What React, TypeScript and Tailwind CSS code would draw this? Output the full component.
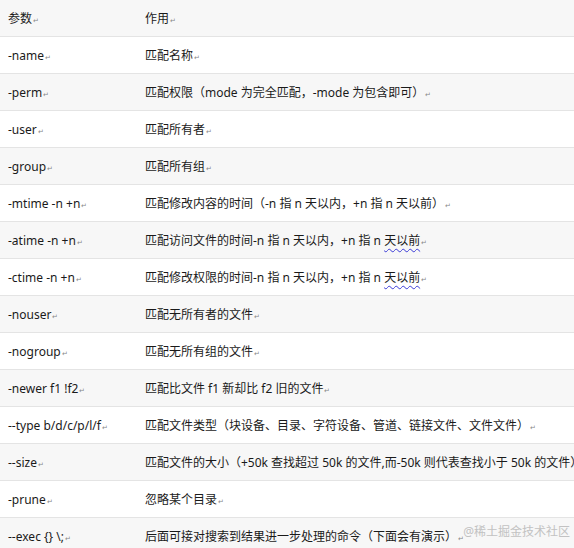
import React from "react";

const rows: [string, React.ReactNode][] = [
  ["-name", "匹配名称"],
  ["-perm", "匹配权限（mode 为完全匹配，-mode 为包含即可）"],
  ["-user", "匹配所有者"],
  ["-group", "匹配所有组"],
  ["-mtime -n +n", "匹配修改内容的时间（-n 指 n 天以内，+n 指 n 天以前）"],
  [
    "-atime -n +n",
    <>
      匹配访问文件的时间-n 指 n 天以内，+n 指 n{" "}
      <span className="underline decoration-wavy decoration-[#3b3bd6] underline-offset-[3px] decoration-1">天以前</span>
    </>,
  ],
  [
    "-ctime -n +n",
    <>
      匹配修改权限的时间-n 指 n 天以内，+n 指 n{" "}
      <span className="underline decoration-wavy decoration-[#3b3bd6] underline-offset-[3px] decoration-1">天以前</span>
    </>,
  ],
  ["-nouser", "匹配无所有者的文件"],
  ["-nogroup", "匹配无所有组的文件"],
  ["-newer f1 !f2", "匹配比文件 f1 新却比 f2 旧的文件"],
  ["--type b/d/c/p/l/f", "匹配文件类型（块设备、目录、字符设备、管道、链接文件、文件文件）"],
  ["--size", "匹配文件的大小（+50k 查找超过 50k 的文件,而-50k 则代表查找小于 50k 的文件）"],
  ["-prune", "忽略某个目录"],
  ["--exec {} \\;", "后面可接对搜索到结果进一步处理的命令（下面会有演示）"],
];

function Mark() {
  return <span className="ml-[1px] text-[7px] leading-none text-[#888]">↵</span>;
}

function Row({ a, b, gray }: { a: string; b: React.ReactNode; gray: boolean }) {
  return (
    <div
      className={`flex h-[37px] shrink-0 items-center border-b border-[#e4e4e4] pt-[2px] text-[12px] text-[#1a1a1a] whitespace-nowrap ${
        gray ? "bg-[#f7f7f7]" : "bg-white"
      }`}
    >
      <div className="w-[145px] shrink-0 pl-2">
        {a}
        <Mark />
      </div>
      <div className="flex-1">
        {b}
        <Mark />
      </div>
    </div>
  );
}

export default function App() {
  return (
    <div
      className="relative h-[548px] w-[574px] overflow-hidden bg-white"
      style={{ fontFamily: '"Noto Sans", "Noto Sans CJK SC", sans-serif' }}
    >
      <div className="flex flex-col">
        <Row a="参数" b="作用" gray />
        {rows.map(([a, b], i) => (
          <Row key={i} a={a} b={b} gray={i % 2 === 1} />
        ))}
      </div>
      <div className="absolute bottom-[7px] right-[4px] text-[12px] text-[#c2c2c2]">@稀土掘金技术社区</div>
    </div>
  );
}
